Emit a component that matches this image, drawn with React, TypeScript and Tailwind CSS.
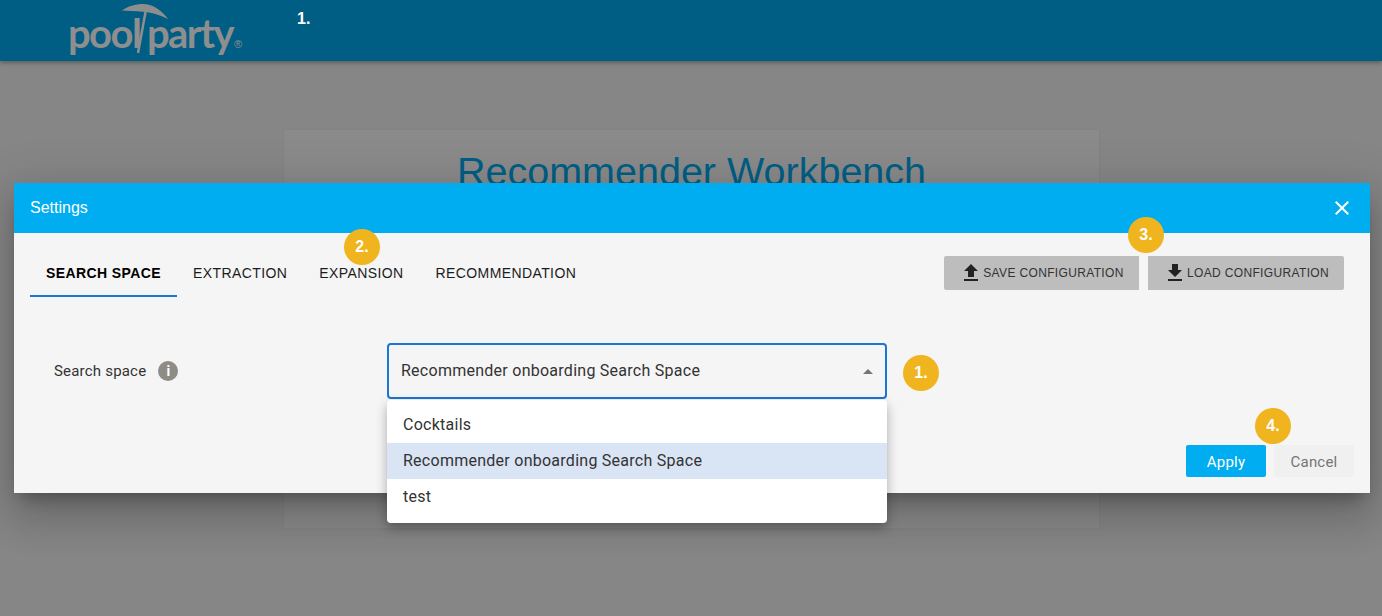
import React from 'react';

const tabs = ['SEARCH SPACE', 'EXTRACTION', 'EXPANSION', 'RECOMMENDATION'];
const options = ['Cocktails', 'Recommender onboarding Search Space', 'test'];

const Badge: React.FC<{ label: string; className: string }> = ({ label, className }) => (
  <div
    className={`absolute w-9 h-9 rounded-full bg-[#f0b41e] flex items-center justify-center text-white text-[16px] font-bold font-['Liberation_Sans',sans-serif] ${className}`}
  >
    {label}
  </div>
);

const Logo = () => (
  <div className="relative w-[180px] h-[61px] ml-[68px]">
    {/* umbrella and its pole, which doubles as the slash */}
    <svg className="absolute left-[48px] top-0" width="56" height="56" viewBox="0 0 56 56">
      <path d="M6 10.5 C 12 6 20 3.8 28 4 C 38 4.5 47 12 52 19 C 44 15 35 12.5 27 11.8 C 19 11 12 10.8 6 10.5 Z" fill="#8e8e8e" />
      <path d="M29.5 12 L 22 53" stroke="#8e8e8e" strokeWidth="2.5" fill="none" />
    </svg>
    <span className="absolute left-0 top-[8px] text-[40px] leading-[50px] tracking-[-1.6px] font-['Lato',sans-serif] font-bold text-[#8e8e8e]">
      pool
    </span>
    <span className="absolute left-[79px] top-[8px] text-[40px] leading-[50px] tracking-[-1.6px] font-['Lato',sans-serif] font-bold text-[#8e8e8e]">
      party
    </span>
    <span className="absolute left-[166px] top-[39px] text-[11px] leading-none font-['Liberation_Sans',sans-serif] text-[#8e8e8e]">®</span>
  </div>
);

const CloseIcon = () => (
  <svg width="24" height="24" viewBox="0 0 24 24" fill="#ffffff">
    <path d="M19 6.41 17.59 5 12 10.59 6.41 5 5 6.41 10.59 12 5 17.59 6.41 19 12 13.41 17.59 19 19 17.59 13.41 12z" />
  </svg>
);

const UploadIcon = () => (
  <svg width="24" height="24" viewBox="0 0 24 24" fill="#222222">
    <path d="M9 16h6v-6h4l-7-7-7 7h4zm-4 2h14v2H5z" />
  </svg>
);

const DownloadIcon = () => (
  <svg width="24" height="24" viewBox="0 0 24 24" fill="#222222">
    <path d="M19 9h-4V3H9v6H5l7 7 7-7zM5 18v2h14v-2H5z" />
  </svg>
);

export default function App() {
  return (
    <div className="relative w-[1382px] h-[616px] overflow-hidden bg-[#868686] font-['Roboto',sans-serif]">
      {/* page behind the dialog */}
      <header className="h-[61px] bg-[#005e85] shadow-[0_2px_4px_rgba(0,0,0,0.3)] flex items-start">
        <Logo />
        <span className="ml-[49px] mt-[9px] text-white text-[16px] leading-[20px] font-bold font-['Liberation_Sans',sans-serif]">1.</span>
      </header>
      <main className="flex justify-center pt-[69px] pl-[1px]">
        <div className="w-[815px] h-[398px] bg-[#8a8a8a] shadow-[0_0_2px_rgba(0,0,0,0.06)] flex justify-center pt-[18px]">
          <h1 className="text-[39.5px] leading-[46px] font-['Liberation_Sans',sans-serif] text-[#005e85]">Recommender Workbench</h1>
        </div>
      </main>

      {/* settings dialog */}
      <div className="absolute left-[14px] top-[183px] w-[1356px] h-[310px] bg-[#f5f5f5] shadow-[0_11px_15px_-7px_rgba(0,0,0,0.28),0_24px_38px_3px_rgba(0,0,0,0.14),0_9px_46px_8px_rgba(0,0,0,0.12)]">
        <div className="h-[50px] bg-[#00adf0] flex items-center justify-between pl-4 pr-4 text-white">
          <span className="text-[16px] font-['Liberation_Sans',sans-serif]">Settings</span>
          <CloseIcon />
        </div>

        <div className="flex items-start justify-between pl-4 pr-[26px] pt-[23px]">
          <div className="flex">
            {tabs.map((tab, i) => (
              <div
                key={tab}
                className={`h-[41px] px-4 flex items-center pb-[4px] text-[14px] tracking-[0.4px] font-['Liberation_Sans',sans-serif] text-[#1c1c1c] border-b-2 ${
                  i === 0 ? 'font-bold text-black border-[#1976d2]' : 'border-transparent'
                }`}
              >
                {tab}
              </div>
            ))}
          </div>
          <div className="flex gap-[9px]">
            <button className="w-[195px] h-[34px] bg-[#bdbdbd] rounded-l-[2px] flex items-center justify-center text-[12px] tracking-[0.35px] font-['Liberation_Sans',sans-serif] text-[#333333]">
              <UploadIcon />
              SAVE CONFIGURATION
            </button>
            <button className="w-[196px] h-[34px] bg-[#bdbdbd] rounded-r-[2px] flex items-center justify-center text-[12px] tracking-[0.35px] font-['Liberation_Sans',sans-serif] text-[#333333]">
              <DownloadIcon />
              LOAD CONFIGURATION
            </button>
          </div>
        </div>

        <div className="flex items-center pl-10 mt-[46px]">
          <div className="w-[333px] flex items-center gap-3">
            <span className="text-[15px] tracking-[0.2px] text-[#333333]">Search space</span>
            <div className="w-5 h-5 rounded-full bg-[#8f8c85] flex items-center justify-center text-white text-[14px] font-bold">i</div>
          </div>
          <div className="relative w-[500px] h-[56px] rounded-[4px] border-2 border-[#1976d2] flex items-center justify-between pl-3 pr-[12px]">
            <span className="text-[16px] tracking-[0.26px] text-[#333333]">Recommender onboarding Search Space</span>
            <div className="w-0 h-0 border-l-[5px] border-r-[5px] border-b-[5px] border-l-transparent border-r-transparent border-b-[#757575]" />
          </div>
        </div>

        <div className="absolute right-4 top-[262px] flex gap-2">
          <button className="w-20 h-8 pt-[2px] bg-[#00adf0] rounded-[2px] text-white text-[15px] tracking-[0.2px]">Apply</button>
          <button className="w-20 h-8 pt-[2px] bg-[#f0f0f0] rounded-[2px] text-[#757575] text-[15px] tracking-[0.2px]">Cancel</button>
        </div>
      </div>

      {/* open select menu */}
      <div className="absolute left-[387px] top-[400px] w-[500px] h-[123px] bg-white rounded-[4px] py-[7px] shadow-[0_5px_12px_rgba(0,0,0,0.3)]">
        {options.map((opt, i) => (
          <div
            key={opt}
            className={`h-9 px-4 flex items-center text-[16px] tracking-[0.26px] text-[#333333] ${i === 1 ? 'bg-[#d9e4f5]' : ''}`}
          >
            {opt}
          </div>
        ))}
      </div>

      <Badge label="2." className="left-[344px] top-[229px]" />
      <Badge label="3." className="left-[1128px] top-[217px]" />
      <Badge label="1." className="left-[903px] top-[355px]" />
      <Badge label="4." className="left-[1255px] top-[408px]" />
    </div>
  );
}
